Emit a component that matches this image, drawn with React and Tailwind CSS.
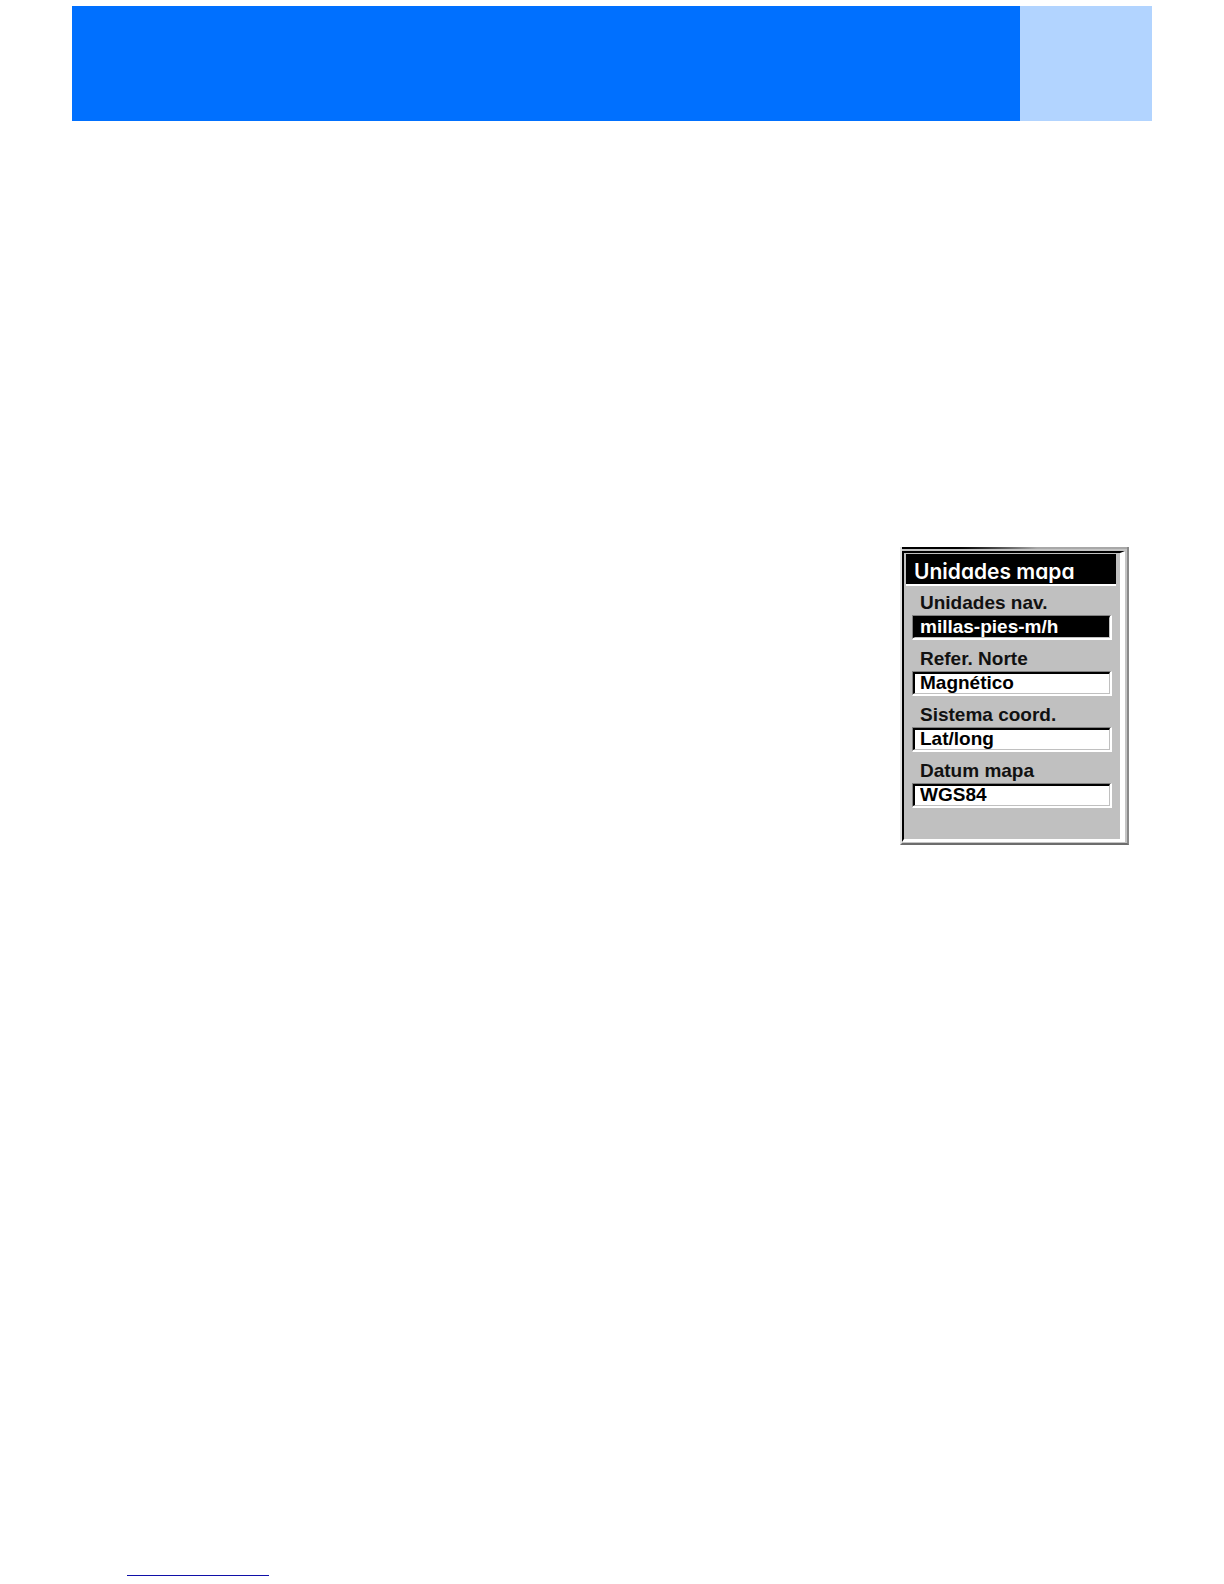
import React from "react";

const fields = [
  { id: "units", label: "Unidades nav.", value: "millas-pies-m/h", selected: true },
  { id: "north", label: "Refer. Norte", value: "Magnético" },
  { id: "coords", label: "Sistema coord.", value: "Lat/long" },
  { id: "datum", label: "Datum mapa", value: "WGS84" },
];

/**
 * Sunken text box with its label above it.
 *
 * @param {Object} props - Component props
 * @param {Object} props.field - Setting to be displayed
 */
const Field = ({ field }) => {
  return (
    <div className="flex flex-col">
      <label htmlFor={field.id} className="pl-2 text-[19px] leading-6 font-bold text-[#111]">
        {field.label}
      </label>
      <div className="h-[25px] border-t border-l border-r-2 border-b-2 border-t-[#808080] border-l-[#808080] border-r-white border-b-white">
        <input
          id={field.id}
          type="text"
          defaultValue={field.value}
          className={`block h-full w-full border-t-2 border-l-2 border-r border-b border-t-black border-l-black border-r-[#c0c0c0] border-b-[#c0c0c0] pb-0.5 pl-[5px] text-[19px] font-bold outline-none ${
            field.selected ? "bg-black text-white" : "bg-white text-black"
          }`}
        />
      </div>
    </div>
  );
};

/** Device screen with the map unit settings */
const MapUnits = () => {
  return (
    <section className="w-[229px] border-l-2 border-r-2 border-b-2 border-l-[#e4e4e4] border-r-[#8a8a8a] border-b-[#6c6c6c]">
      <div className="h-0.5 bg-linear-to-r from-black from-20% to-[#a8a8a8] to-60%" />
      <div className="border-t-2 border-r-2 border-b border-[#c4c4c4]">
        <div className="border-t-2 border-l-2 border-r-[5px] border-b-[3px] border-t-black border-l-black border-r-white border-b-white bg-[#c0c0c0] pt-px pb-[31px]">
          <h1 className="mr-1 ml-0.5 h-8 border-b-2 border-white bg-black pl-2 font-['Inter',sans-serif] text-[21px] leading-9 font-semibold text-white [font-feature-settings:'cv11']">
            Unidades mapa
          </h1>
          <form className="flex flex-col gap-[7px] px-2 pt-[5px]">
            {fields.map((field) => (
              <Field key={field.id} field={field} />
            ))}
          </form>
        </div>
      </div>
    </section>
  );
};

const App = () => {
  return (
    <div className="flex min-h-screen flex-col bg-white px-[72px] pt-1.5 pb-2 font-['Liberation_Sans',Arial,sans-serif]">
      <header className="flex h-[115px]">
        <div className="flex-1 bg-[#0070ff]" />
        <div className="w-[132px] bg-[#b2d4ff]" />
      </header>
      <main className="flex justify-end pt-[426px] pr-[23px]">
        <MapUnits />
      </main>
      <footer className="mt-auto pl-[55px]">
        <hr className="w-[142px] border-[#1010a8]" />
      </footer>
    </div>
  );
};

export default App;
